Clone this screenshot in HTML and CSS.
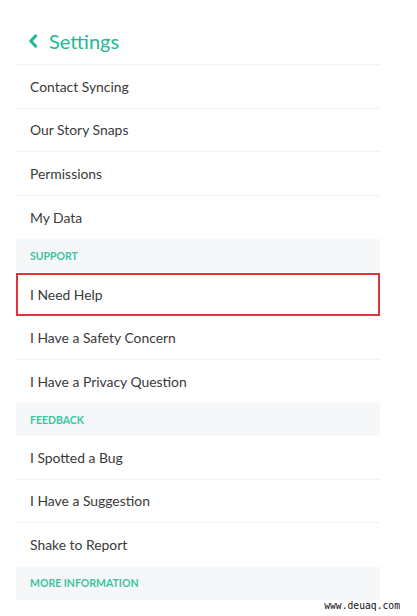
FILE: index.html
```html
<!DOCTYPE html>
<html>
<head>
<meta charset="utf-8">
<link rel="stylesheet" href="styles.css">
</head>
<body>
<div class="panel">
  <div class="title">
    <svg class="back" width="10" height="14" viewBox="0 0 10 14"><path d="M7.5 2 L2.8 7 L7.5 12" fill="none" stroke="#22b893" stroke-width="3.2" stroke-linecap="round" stroke-linejoin="round"/></svg>
    <span>Settings</span>
  </div>
  <div class="row">Contact Syncing</div>
  <div class="row">Our Story Snaps</div>
  <div class="row">Permissions</div>
  <div class="row last">My Data</div>
  <div class="header">SUPPORT</div>
  <div class="row highlight">I Need Help</div>
  <div class="row">I Have a Safety Concern</div>
  <div class="row last">I Have a Privacy Question</div>
  <div class="header">FEEDBACK</div>
  <div class="row">I Spotted a Bug</div>
  <div class="row">I Have a Suggestion</div>
  <div class="row last">Shake to Report</div>
  <div class="header">MORE INFORMATION</div>
</div>
<div class="watermark">www.deuaq.com</div>
</body>
</html>
```
FILE: styles.css
```css
html, body {
  margin: 0;
  padding: 0;
  background: #ffffff;
}
body {
  width: 417px;
  height: 616px;
  overflow: hidden;
  position: relative;
  font-family: Lato, "Open Sans", sans-serif;
}
.panel {
  margin-left: 16px;
  width: 364px;
}
.title {
  height: 65px;
  box-sizing: border-box;
  display: flex;
  align-items: center;
  padding: 18px 0 0 12px;
  gap: 11px;
  color: #22b893;
  font-size: 20px;
  border-bottom: 1px solid #f1f2f4;
}
.back {
  display: block;
}
.row {
  height: 43.5px;
  box-sizing: border-box;
  display: flex;
  align-items: center;
  padding-left: 14px;
  font-size: 13.9px;
  color: #3a3a3a;
  border-bottom: 1px solid #f1f2f4;
}
.row.last {
  border-bottom: none;
}
.row.highlight {
  border: 2px solid #e2323c;
  padding-left: 12px;
  height: 43px;
  margin-top: 1px;
}
.header {
  height: 33px;
  background: #f6f7f9;
  display: flex;
  align-items: center;
  padding-left: 14px;
  font-size: 10.5px;
  font-weight: 700;
  color: #3cc4a2;
}
.watermark {
  position: absolute;
  right: 17px;
  bottom: 5px;
  font-family: "DejaVu Sans Mono", monospace;
  font-size: 9.7px;
  color: #111;
}
```
